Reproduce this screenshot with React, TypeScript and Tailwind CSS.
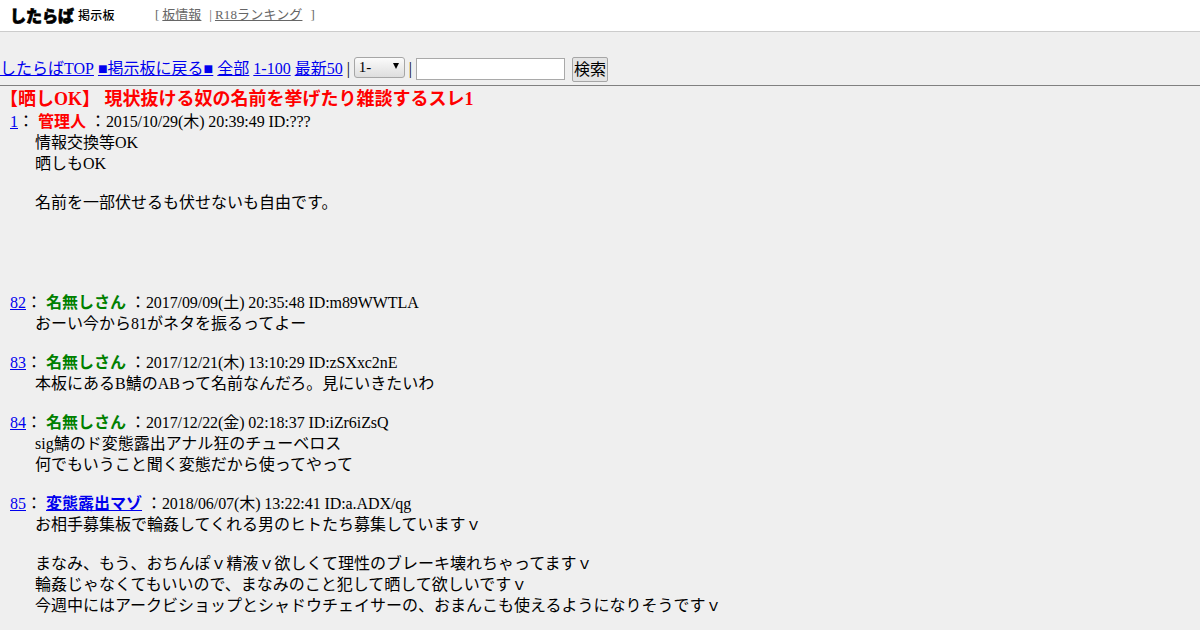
const serif = "font-['Liberation_Serif','Noto_Sans_CJK_JP',serif]";

type Post = {
  no: number;
  name: string;
  nameClass: string;
  meta: string;
  lines: string[];
};

const posts: Post[] = [
  {
    no: 1,
    name: "管理人",
    nameClass: "text-[#ff0000]",
    meta: "2015/10/29(木) 20:39:49 ID:???",
    lines: ["情報交換等OK", "晒しもOK", "", "名前を一部伏せるも伏せないも自由です。", "", "", "", ""],
  },
  {
    no: 82,
    name: "名無しさん",
    nameClass: "text-[#008000]",
    meta: "2017/09/09(土) 20:35:48 ID:m89WWTLA",
    lines: ["おーい今から81がネタを振るってよー", ""],
  },
  {
    no: 83,
    name: "名無しさん",
    nameClass: "text-[#008000]",
    meta: "2017/12/21(木) 13:10:29 ID:zSXxc2nE",
    lines: ["本板にあるB鯖のABって名前なんだろ。見にいきたいわ", ""],
  },
  {
    no: 84,
    name: "名無しさん",
    nameClass: "text-[#008000]",
    meta: "2017/12/22(金) 02:18:37 ID:iZr6iZsQ",
    lines: ["sig鯖のド変態露出アナル狂のチューベロス", "何でもいうこと聞く変態だから使ってやって", ""],
  },
  {
    no: 85,
    name: "変態露出マゾ",
    nameClass: "text-[#0000ee] underline",
    meta: "2018/06/07(木) 13:22:41 ID:a.ADX/qg",
    lines: [
      "お相手募集板で輪姦してくれる男のヒトたち募集していますｖ",
      "",
      "まなみ、もう、おちんぽｖ精液ｖ欲しくて理性のブレーキ壊れちゃってますｖ",
      "輪姦じゃなくてもいいので、まなみのこと犯して晒して欲しいですｖ",
      "今週中にはアークビショップとシャドウチェイサーの、おまんこも使えるようになりそうですｖ",
    ],
  },
];

export default function App() {
  return (
    <div className={`h-screen overflow-hidden bg-[#efefef] text-black text-base leading-[21px] ${serif}`}>
      <header className="h-8 bg-white border-b border-[#cccccc] flex items-center">
        <div className="w-[155px] pl-[10px] -mt-[2px] flex items-center font-['Noto_Sans_CJK_JP',sans-serif] text-black">
          <span className="text-[16px] leading-none font-black [-webkit-text-stroke:0.7px_black]">したらば</span>
          <span className="text-[12px] leading-none font-medium ml-[4px] tracking-[0.3px]">掲示板</span>
        </div>
        <div className="text-[13px] text-[#666666] flex -mt-[2px]">
          <span className="mr-[2px]">[</span>
          <a className="underline ml-[1px]">板情報</a>
          <span className="ml-2 mr-[3px]">|</span>
          <a className="underline tracking-[0.15px]">R18ランキング</a>
          <span className="ml-2">]</span>
        </div>
      </header>

      <nav className="h-[54px] border-b border-[#808080] flex items-end pb-[6px] whitespace-pre">
        <a className="underline text-[#0000ee]">したらばTOP</a>
        <span> </span>
        <a className="underline text-[#0000ee]">■掲示板に戻る■</a>
        <span> </span>
        <a className="underline text-[#0000ee]">全部</a>
        <span> </span>
        <a className="underline text-[#0000ee]">1-100</a>
        <span> </span>
        <a className="underline text-[#0000ee]">最新50</a>
        <span> | </span>
        <div className="w-[51px] h-[21px] mb-[1px] border border-[#a6a6a6] rounded-[3px] bg-gradient-to-b from-[#fbfbfb] to-[#dedede] flex items-center justify-between pl-1 pr-[5px] text-[15px]">
          <span>1-</span>
          <span className="w-0 h-0 -mt-1 border-x-[3.5px] border-x-transparent border-t-[6px] border-t-black" />
        </div>
        <span> | </span>
        <input className="w-[149px] h-[22px] -mb-[1px] bg-white border border-[#a9a9a9] outline-none" />
        <button className="ml-[7px] w-9 h-[25px] -mb-[3px] border border-[#a6a6a6] rounded-[2px] bg-[#e4e4e4] text-base">検索</button>
      </nav>

      <h1 className="text-[18px] font-bold text-[#ff0000] leading-[23px] mt-[2px]">【晒しOK】 現状抜ける奴の名前を挙げたり雑談するスレ1</h1>

      <dl>
        {posts.map((p) => (
          <div key={p.no} className={p.no === 1 ? "mb-[7px]" : ""}>
            <dt className="pl-[10px]">
              <a className="underline text-[#0000ee]">{p.no}</a>
              <span>： </span>
              <span className={`font-bold ${p.nameClass}`}>{p.name}</span>
              <span className="tracking-[-0.08px]"> ：{p.meta}</span>
            </dt>
            <dd className="ml-[35px]">
              {p.lines.map((line, i) => (
                <div key={i} className={line === "" ? "h-[18px]" : ""}>{line}</div>
              ))}
            </dd>
          </div>
        ))}
      </dl>
    </div>
  );
}
